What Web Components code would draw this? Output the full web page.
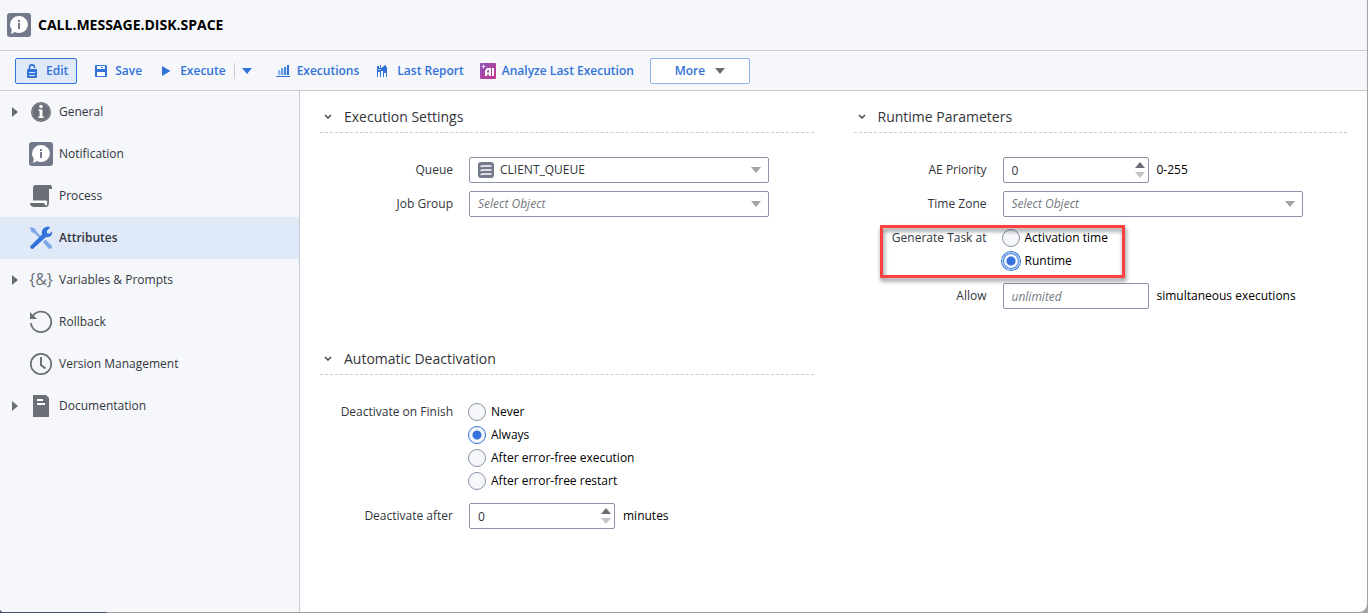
<!DOCTYPE html>
<html lang="en">
<head>
<meta charset="UTF-8">
<meta name="viewport" content="width=device-width, initial-scale=1.0">
<title>CALL.MESSAGE.DISK.SPACE</title>
<style>
  :root {
    --blue: #3272d9;
    --gray: #6b6e76;
    --line: #c9cbd3;
    --field: #8a94a6;
    --panel: #f5f7fb;
    --active: #dfe9f8;
  }
  body {
    margin: 0;
    min-height: 100vh;
    display: flex;
    box-sizing: border-box;
    padding: 0 1px 1px 0;
    background: linear-gradient(90deg, #46526f 107px, #a3a3a6 107px);
    font: 12px/18px "Open Sans", "Noto Sans", sans-serif;
    color: #32353b;
  }
</style>
</head>
<body>
<object-editor>
  <object-title slot="header">CALL.MESSAGE.DISK.SPACE</object-title>

  <tool-bar slot="toolbar">
    <tool-button icon="unlock" pressed>Edit</tool-button>
    <tool-button icon="save">Save</tool-button>
    <tool-button icon="play" menu>Execute</tool-button>
    <tool-button icon="bars">Executions</tool-button>
    <tool-button icon="report">Last Report</tool-button>
    <tool-button icon="ai">Analyze Last Execution</tool-button>
    <tool-button more>More</tool-button>
  </tool-bar>

  <side-nav slot="nav">
    <nav-item icon="info" expandable>General</nav-item>
    <nav-item icon="notification">Notification</nav-item>
    <nav-item icon="process">Process</nav-item>
    <nav-item icon="tools" active>Attributes</nav-item>
    <nav-item icon="variables" expandable>Variables &amp; Prompts</nav-item>
    <nav-item icon="rollback">Rollback</nav-item>
    <nav-item icon="clock">Version Management</nav-item>
    <nav-item icon="document" expandable>Documentation</nav-item>
  </side-nav>

  <form-section heading="Execution Settings">
    <select-field label="Queue" icon="queue" value="CLIENT_QUEUE"></select-field>
    <select-field label="Job Group" placeholder="Select Object"></select-field>
  </form-section>

  <form-section heading="Runtime Parameters">
    <text-field label="AE Priority" value="0" suffix="0-255" spinner></text-field>
    <select-field label="Time Zone" placeholder="Select Object"></select-field>
    <radio-field label="Generate Task at" options="Activation time|Runtime" value="Runtime" highlight></radio-field>
    <text-field label="Allow" placeholder="unlimited" suffix="simultaneous executions"></text-field>
  </form-section>

  <form-section heading="Automatic Deactivation">
    <radio-field label="Deactivate on Finish" options="Never|Always|After error-free execution|After error-free restart" value="Always"></radio-field>
    <text-field label="Deactivate after" value="0" suffix="minutes" spinner></text-field>
  </form-section>
</object-editor>

<script>
const bubble = `<rect width="24" height="24" rx="3" fill="#71798b"/>
  <path d="M12 3a9 8.500 0 1 1-4.200 16.100L4 21l.8-4.200A8 8 0 0 1 3 11.500 9 8.500 0 0 1 12 3z" fill="#fff"/>
  <path d="M11 7h2v2h-2zM11 10h2v6h-2z" fill="#71798b"/>`;

const ICONS = {
  notification: [24, 24, bubble],
  info: [24, 24, `<circle cx="12" cy="12" r="10" fill="#6b6e76"/>
    <circle cx="12" cy="12" r="8.500" fill="none" stroke="#85888f"/>
    <circle cx="12" cy="6.500" r="1.800" fill="#fff"/>
    <path d="M9.500 9.500h4v7h1.300v1.600H9.300v-1.600h1.300v-5.400H9.500z" fill="#fff"/>`],
  process: [24, 24, `<path d="M7 1h14c1.500 0 2 1 2 3v1h-3v13h-1.500c0-1-1-1.500-2-1.500H4V4c0-2 1-3 3-3z" fill="#6b6e76"/>
    <path d="M1 19h14.500c0 1.800 1 2.500 2.500 2.500V18h2c0 3-1 5-3 5H5c-2 0-4-1.500-4-4z" fill="#6b6e76"/>
    <path d="M4 17h13c1.600 0 1.600 4 0 4-1 0-1.500-.8-1.500-2H4z" fill="#fff"/>`],
  tools: [24, 24, `<path d="M1 1l4.500 1.200 1.800 3.400 4.400 4.400-1.700 1.700-4.400-4.400-3.300-1.600z" fill="#7ba6e8"/>
    <path d="M14 16l2.500-2.500 6 6c1.500 1.800-1.200 4.500-3 3z" fill="#7ba6e8"/>
    <path d="M21.300 1.300l-3.600 3.600.4 2.400 2.500.4 2.400-2.500c.8 4-2.200 6.700-6 5.800L4.300 22.400c-1.700 1.600-4.200-.8-2.600-2.600L13 8.400c-1.200-5 3.300-8.900 8.300-7.100z" fill="#3272d9"/>`],
  variables: [24, 24, `<text x="12" y="17" text-anchor="middle" font-family="Open Sans" font-size="16" font-weight="500" fill="#6b6e76">{&amp;}</text>`],
  rollback: [24, 24, `<path d="M3.500 6.300A10.200 10.200 0 1 1 1.900 13" fill="none" stroke="#6b6e76" stroke-width="1.800"/>
    <path d="M1 2v7h7z" fill="#6b6e76"/>`],
  clock: [24, 24, `<circle cx="12" cy="12" r="10.200" fill="none" stroke="#6b6e76" stroke-width="1.700"/>
    <path d="M12 5v8l4.500 3.500" fill="none" stroke="#6b6e76" stroke-width="2"/>`],
  document: [24, 24, `<path d="M4 1h13l3 3v19H4z" fill="#6b6e76"/>
    <path d="M8 6h6M8 10h8" stroke="#fff" stroke-width="2"/>`],
  unlock: [16, 16, `<path d="M5.500 7V4.500C5.500 1 10.500 1 10.500 4.500V5" fill="none" stroke="#3272d9" stroke-width="1.600"/>
    <rect x="3" y="6" width="10" height="9" rx="1" fill="#3272d9"/>
    <path d="M5 9.500h6M5 12.500h6" stroke="#dfe9f8"/>`],
  save: [16, 16, `<path d="M2 3c0-.6.400-1 1-1h10l1 1v10c0 .6-.4 1-1 1H3c-.6 0-1-.4-1-1z" fill="#3272d9"/>
    <path d="M4 3h8v3H4zM4 9h8v4H4z" fill="#fff"/><path d="M8 4h2v1H8z" fill="#3272d9"/>`],
  play: [16, 16, `<path d="M4 3l8.500 5L4 13z" fill="#3272d9"/>`],
  bars: [16, 16, `<path d="M3 7h2v5H3z" fill="#8fb3ea"/><path d="M5 8h1v4H5zM8 6h1v6H8zM11 4h1v8h-1z" fill="#c6d9f5"/>
    <path d="M6 5h2v7H6z" fill="#6f9de6"/><path d="M9 4h2v8H9z" fill="#5087df"/>
    <path d="M12 2h2v10h-2zM1 13h14v1H1z" fill="#3272d9"/>`],
  report: [16, 16, `<path d="M2 3h2v2h1V2h1v3h1V4h1L10 2h1v2h1v10H2z" fill="#3272d9"/>
    <path d="M3 9h2v5H3zM6 8h2v6H6zM9 10h2v4H9z" fill="#fff"/><path d="M3 6h3v1H3z" fill="#a9c5f0"/>`],
  ai: [16, 16, `<defs><linearGradient id="g" y2="1"><stop stop-color="#8b55bd"/><stop offset="1" stop-color="#c53689"/></linearGradient></defs>
    <rect width="16" height="16" rx="1" fill="url(#g)"/>
    <path d="M3.500 1l.6 1.900 1.900.6-1.900.6-.6 1.900-.6-1.900L1 3.500l1.900-.6z" fill="#fff"/>
    <path d="M6 13V8l1.500-2H10v7M6 10.500h4M13 5v8" fill="none" stroke="#fff" stroke-width="2"/>`],
  queue: [16, 16, `<rect width="16" height="16" rx="3" fill="#71798b"/>
    <path d="M2.500 4.500l3-.5h8M2.500 8.500l3-.5h8M2.500 12.500l3-.5h8" fill="none" stroke="#fff" stroke-width="1.600"/>`],
  down: [10, 6, `<path d="M0 0h10L5 6z" fill="currentColor"/>`],
  up: [10, 6, `<path d="M0 6h10L5 0z" fill="currentColor"/>`],
  right: [6, 10, `<path d="M0 0l6 5-6 5z" fill="currentColor"/>`],
  chevron: [8, 5, `<path d="M1 1l3 3 3-3" fill="none" stroke="#45484f" stroke-width="1.500"/>`]
};

function icon(name) {
  const [w, h, body] = ICONS[name];
  return `<svg width="${w}" height="${h}" viewBox="0 0 ${w} ${h}" aria-hidden="true">${body}</svg>`;
}

class BaseElement extends HTMLElement {
  constructor() {
    super();
    this._shadow = this.attachShadow({ mode: 'open' });
  }

  connectedCallback() {
    this._shadow.innerHTML = this.render();
  }

  attr(name) {
    return this.getAttribute(name) || '';
  }
}

class ObjectEditor extends BaseElement {
  render() {
    return `
    <style>
      :host {
        flex: 1;
        display: flex;
        flex-direction: column;
        background: #fff;
        border-radius: 0 0 8px 4px;
        overflow: hidden;
      }
      .body {
        flex: 1;
        display: flex;
      }
      main {
        flex: 1;
        display: grid;
        grid-template-columns: 1fr 1fr;
        align-content: start;
        gap: 34px 40px;
        padding: 10px 20px;
      }
    </style>
    <slot name="header"></slot>
    <slot name="toolbar"></slot>
    <div class="body">
      <slot name="nav"></slot>
      <main><slot></slot></main>
    </div>`;
  }
}

class ObjectTitle extends BaseElement {
  render() {
    return `
    <style>
      :host {
        display: flex;
        align-items: center;
        gap: 7px;
        height: 50px;
        padding: 0 7px;
        background: var(--panel);
        border-bottom: 1px solid var(--line);
      }
      h1 {
        margin: 0;
        font-size: 14px;
        font-weight: 700;
        color: #000;
      }
    </style>
    ${icon('notification')}
    <h1><slot></slot></h1>`;
  }
}

class ToolBar extends BaseElement {
  render() {
    return `
    <style>
      :host {
        display: flex;
        align-items: center;
        gap: 16px;
        height: 39px;
        padding: 0 15px;
        background: var(--panel);
        border-bottom: 1px solid var(--line);
      }
    </style>
    <slot></slot>`;
  }
}

class ToolButton extends BaseElement {
  render() {
    const more = this.hasAttribute('more');
    return `
    <style>
      :host {
        display: flex;
        align-items: center;
      }
      button {
        display: flex;
        align-items: center;
        justify-content: center;
        gap: 6px;
        height: 26px;
        padding: 0;
        border: 0;
        background: none;
        font: inherit;
        font-weight: 600;
        color: var(--blue);
        white-space: nowrap;
        cursor: pointer;
      }
      :host([pressed]) button {
        padding: 0 8px;
        border: 1px solid var(--blue);
        border-radius: 2px;
        background: var(--active);
      }
      :host([more]) button {
        width: 100px;
        gap: 10px;
        border: 1px solid #8fb3ea;
        border-radius: 2px;
        background: #fff;
      }
      :host([more]) svg {
        color: var(--gray);
      }
      .menu {
        height: 16px;
        margin-left: 8px;
        padding: 0 7px;
        border-left: 1px solid var(--line);
      }
    </style>
    <button type="button">${more ? '' : icon(this.attr('icon'))}<slot></slot>${more ? icon('down') : ''}</button>
    ${this.hasAttribute('menu') ? `<button type="button" class="menu" aria-label="Execute options">${icon('down')}</button>` : ''}`;
  }
}

class SideNav extends BaseElement {
  render() {
    return `
    <style>
      :host {
        flex: 0 0 299px;
        background: var(--panel);
        border-right: 1px solid var(--line);
      }
    </style>
    <nav><slot></slot></nav>`;
  }
}

class NavItem extends BaseElement {
  render() {
    return `
    <style>
      :host {
        display: block;
      }
      a {
        display: flex;
        align-items: center;
        gap: 6px;
        height: 42px;
        padding-left: 12px;
        color: inherit;
        text-decoration: none;
      }
      :host([active]) a {
        background: var(--active);
        font-weight: 600;
      }
      .arrow {
        display: flex;
        width: 11px;
        color: var(--gray);
      }
    </style>
    <a href="#">
      <span class="arrow">${this.hasAttribute('expandable') ? icon('right') : ''}</span>
      ${icon(this.attr('icon'))}
      <slot></slot>
    </a>`;
  }
}

class FormSection extends BaseElement {
  render() {
    return `
    <style>
      :host {
        display: block;
      }
      h2 {
        margin: 0 0 24px;
        border-bottom: 1px dashed var(--line);
        font-size: 14px;
        font-weight: 400;
      }
      h2 button {
        display: flex;
        align-items: center;
        gap: 12px;
        width: 100%;
        height: 31px;
        padding: 0 4px;
        border: 0;
        background: none;
        font: inherit;
        color: inherit;
      }
      .fields {
        display: flex;
        flex-direction: column;
        gap: 8px;
      }
    </style>
    <h2><button type="button" aria-expanded="true">${icon('chevron')}${this.attr('heading')}</button></h2>
    <div class="fields"><slot></slot></div>`;
  }
}

// shared row layout: right-aligned label, then the control
const fieldStyle = `
  :host, fieldset {
    display: flex;
    gap: 16px;
  }
  .label {
    flex: 0 0 133px;
    line-height: 26px;
    text-align: right;
    white-space: nowrap;
  }
  .box {
    display: flex;
    align-items: center;
    box-sizing: border-box;
    min-width: 0;
    height: 26px;
    border: 1px solid var(--field);
    border-radius: 2px;
    background: #fff;
  }`;

class SelectField extends BaseElement {
  render() {
    const value = this.attr('value');
    return `
    <style>
      ${fieldStyle}
      .box {
        flex: 0 1 300px;
        gap: 6px;
        padding: 0 7px 0 8px;
        color: #a3a4a8;
      }
      select {
        flex: 1;
        min-width: 0;
        height: 24px;
        padding: 0;
        border: 0;
        background: none;
        appearance: none;
        outline: 0;
        font: inherit;
        color: #32353b;
      }
      select.empty {
        font-style: italic;
        color: #75777d;
      }
    </style>
    <label class="label" for="control">${this.attr('label')}</label>
    <div class="box">
      ${this.attr('icon') ? icon(this.attr('icon')) : ''}
      <select id="control" class="${value ? '' : 'empty'}"><option>${value || this.attr('placeholder')}</option></select>
      ${icon('down')}
    </div>`;
  }
}

class TextField extends BaseElement {
  render() {
    return `
    <style>
      ${fieldStyle}
      .box {
        flex: 0 0 146px;
        padding: 0 3px 0 8px;
      }
      input {
        flex: 1;
        min-width: 0;
        height: 24px;
        padding: 0;
        border: 0;
        background: none;
        outline: 0;
        font: inherit;
        color: inherit;
      }
      input::placeholder {
        font-style: italic;
        color: #75777d;
      }
      .spin {
        display: flex;
        flex-direction: column;
        gap: 4px;
      }
      .spin button {
        display: flex;
        padding: 0;
        border: 0;
        background: none;
        color: var(--gray);
      }
      .spin button + button {
        color: #c4c5c8;
      }
      .suffix {
        margin-left: -8px;
        line-height: 26px;
        color: #000;
      }
    </style>
    <label class="label" for="control">${this.attr('label')}</label>
    <div class="box">
      <input id="control" type="text" value="${this.attr('value')}" placeholder="${this.attr('placeholder')}">
      ${this.hasAttribute('spinner') ? `<span class="spin">
        <button type="button" aria-label="Increase">${icon('up')}</button>
        <button type="button" aria-label="Decrease">${icon('down')}</button>
      </span>` : ''}
    </div>
    <span class="suffix">${this.attr('suffix')}</span>`;
  }
}

class RadioField extends BaseElement {
  render() {
    const value = this.attr('value');
    const options = this.attr('options').split('|').map((text) => `
      <label><input type="radio" name="choice" ${text === value ? 'checked' : ''}>${text}</label>`).join('');
    return `
    <style>
      ${fieldStyle}
      :host {
        position: relative;
      }
      fieldset {
        gap: 15px;
        margin: 0;
        padding: 0;
        border: 0;
      }
      .options {
        padding: 1px 0 3px;
      }
      .options label {
        display: flex;
        align-items: center;
        gap: 5px;
        height: 23px;
        color: #000;
      }
      input {
        appearance: none;
        box-sizing: border-box;
        width: 18px;
        height: 18px;
        margin: 0;
        border: 1px solid var(--field);
        border-radius: 50%;
        background: var(--panel);
      }
      input:checked {
        border-color: var(--blue);
        background: radial-gradient(circle, var(--blue) 4px, var(--panel) 5px);
      }
      :host([highlight]) input:checked {
        border-color: #a9c5f0;
        box-shadow: 0 0 0 1px var(--blue), inset 0 0 0 1px var(--blue);
      }
      /* red frame that calls out the setting */
      :host([highlight])::after {
        content: "";
        position: absolute;
        top: 0;
        left: 26px;
        box-sizing: border-box;
        width: 245px;
        height: 53px;
        border: 3px solid #fd4141;
        filter: drop-shadow(1px 3px 2px rgba(0, 0, 0, .5));
        pointer-events: none;
      }
    </style>
    <fieldset aria-labelledby="name">
      <span class="label" id="name">${this.attr('label')}</span>
      <div class="options">${options}</div>
    </fieldset>`;
  }
}

customElements.define('object-editor', ObjectEditor);
customElements.define('object-title', ObjectTitle);
customElements.define('tool-bar', ToolBar);
customElements.define('tool-button', ToolButton);
customElements.define('side-nav', SideNav);
customElements.define('nav-item', NavItem);
customElements.define('form-section', FormSection);
customElements.define('select-field', SelectField);
customElements.define('text-field', TextField);
customElements.define('radio-field', RadioField);
</script>
</body>
</html>
